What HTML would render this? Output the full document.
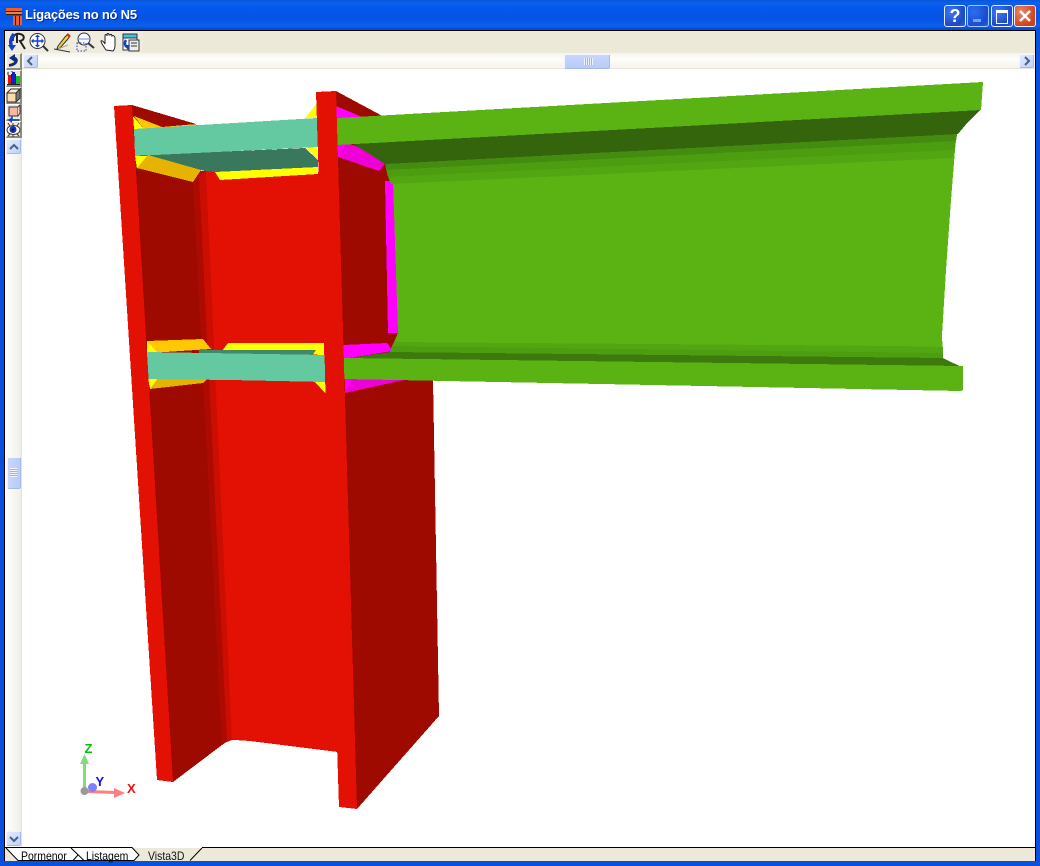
<!DOCTYPE html>
<html><head><meta charset="utf-8">
<style>
html,body{margin:0;padding:0;background:#fff}
#w{position:relative;width:1040px;height:866px;overflow:hidden;font-family:"Liberation Sans",sans-serif;background:#0a50e0}
#w>*{position:absolute}
.tb{left:0;top:0;width:1040px;height:30px;background:linear-gradient(#0a55d8 0,#0a60f0 3px,#0558ee 8px,#0553e3 18px,#0a60ee 26px,#0546c8 30px)}
.title{left:25px;top:7px;color:#fff;font-size:13px;font-weight:bold;letter-spacing:-.22px;text-shadow:1px 1px 0 #0a2a90;white-space:nowrap}
.b{top:5px;width:20px;height:20px;border:1px solid #e8eefc;border-radius:3px;box-sizing:content-box;background:radial-gradient(circle at 30% 30%,#3f78f0,#1a48c8 70%,#2e62dc);color:#fff;text-align:center}
.sb{background:linear-gradient(90deg,#fff,#f5f4ee 70%,#eeede5)}
.btn{background:linear-gradient(135deg,#e2ebfe,#c0d0fa);border:1px solid #f2f5ff;border-right-color:#a6bbe8;border-bottom-color:#a6bbe8;border-radius:2px;box-sizing:border-box}
.tool{background:#ece9d8;border-right:2px solid #8d8b7d;border-bottom:2px solid #8d8b7d;border-top:1px solid #fff;border-left:1px solid #fff;box-sizing:border-box}
.tab{font-size:12px;color:#000;top:849px;white-space:nowrap;transform:scaleX(.87);transform-origin:0 0}
</style></head><body>
<div id="w">
<div class="tb"></div>
<svg style="left:4px;top:6px" width="20" height="20" viewBox="0 0 20 20"><rect x="2" y="2" width="16" height="3" fill="#e8602c"/><rect x="2" y="5" width="16" height="1" fill="#302018"/><rect x="2" y="6" width="16" height="2" fill="#f08040"/><rect x="2" y="8" width="16" height="1" fill="#302018"/><rect x="9" y="10" width="9" height="9" fill="#e8602c"/><rect x="11" y="10" width="1" height="9" fill="#302018"/><rect x="15" y="10" width="1" height="9" fill="#302018"/></svg>
<div class="title">Ligações no nó N5</div>
<div class="b" style="left:944px;font-size:18px;font-weight:bold;line-height:20px">?</div>
<div class="b" style="left:967px;opacity:.72"><div style="position:absolute;left:5px;top:13px;width:8px;height:3px;background:#9db8ef"></div></div>
<div class="b" style="left:991px"><div style="position:absolute;left:4px;top:4px;width:10px;height:10px;border:1px solid #fff;border-top:3px solid #fff"></div></div>
<div class="b" style="left:1014px;background:radial-gradient(circle at 30% 30%,#e8876a,#d2421c 70%,#c8401c)"><svg width="20" height="20" style="position:absolute;left:0;top:0"><path d="M5 5L15 15M15 5L5 15" stroke="#fff" stroke-width="2.6"/></svg></div>

<div style="left:4px;top:30px;width:1032px;height:831px;background:#fff;border:1px solid #000;box-sizing:border-box"></div>
<div style="left:5px;top:31px;width:1030px;height:22px;background:#ece9d8"></div>
<div style="left:5px;top:31px;width:138px;height:22px;background:#efecdf"></div>
<div style="left:22px;top:53px;width:1013px;height:16px;background:linear-gradient(#f4f3ec,#fdfdfb 40%,#f5f4ed);border-bottom:1px solid #e8e6da;box-sizing:border-box"></div>
<div class="sb" style="left:5px;top:53px;width:17px;height:794px;border-right:1px solid #e6e4d8;box-sizing:border-box"></div>

<!-- toolbar icons -->
<svg style="left:0;top:31px" width="145" height="22" viewBox="0 0 145 22">
<g fill="none">
<g transform="translate(6,0)">
<path d="M7 10C6 5 10 2 14 3C19 4 19 9 14 10L19 18M11 4L11 12" stroke="#222" stroke-width="2"/><path d="M8 3C4 8 4 12 6 17" stroke="#1040d0" stroke-width="3.500"/><path d="M2 14L6 20L10 14z" fill="#1040d0"/>
</g>
<circle cx="37.500" cy="10" r="7.500" stroke="#333" fill="#fff"/><path d="M37.500 6V14M33.500 10H41.500" stroke="#1040d0" stroke-width="1.500"/><path d="M35 6L37.500 3.500 40 6zM35 14L37.500 16.500 40 14zM33.500 7.500L31 10 33.500 12.500zM41.500 7.500L44 10 41.500 12.500z" fill="#1040d0"/><path d="M43 15L48 20" stroke="#333" stroke-width="2"/>
<path d="M58 15L65 6L68 3L70 5L68 8L60 17L57 18z" fill="#f0d040" stroke="#333"/><path d="M67 3L70 6" stroke="#d03020" stroke-width="2"/><path d="M54 18L70 21" stroke="#333"/><path d="M58 18L68 14" stroke="#aaa"/>
<circle cx="84" cy="8" r="6" stroke="#333" fill="#f8f8ff"/><path d="M78 8h11" stroke="#7090d0"/><path d="M88 12L94 17" stroke="#333" stroke-width="2"/><rect x="77" y="12" width="9" height="8" stroke="#2040d0" stroke-dasharray="1.500 1.500"/>
<path d="M106 19C104 16 101 12 101 10C102 9 104 11 105 13L105 5C105 3 107 3 107 5L107 4C107 2 109 2 109 4L110 4C110 3 112 3 112 5L112 5C113 4 115 5 115 7L115 14C115 17 114 19 113 20z" fill="#fff" stroke="#222"/>
<rect x="123" y="3" width="14" height="16" fill="#fff" stroke="#333"/><rect x="123" y="3" width="14" height="4" fill="#40c0e8" stroke="#333"/><rect x="129" y="9" width="10" height="11" fill="#eee" stroke="#333"/><path d="M131 12h6M131 15h6" stroke="#333"/><path d="M126 9C124 12 125 15 127 16" stroke="#1040d0" stroke-width="2.500"/><path d="M124 14L128 19L130 14z" fill="#1040d0"/>
</g>
</svg>

<!-- side tools -->
<div class="tool" style="left:6px;top:53px;width:16px;height:17px"></div>
<div class="tool" style="left:6px;top:70px;width:16px;height:17px"></div>
<div class="tool" style="left:6px;top:87px;width:16px;height:17px"></div>
<div class="tool" style="left:6px;top:104px;width:16px;height:17px"></div>
<div class="tool" style="left:6px;top:121px;width:16px;height:17px"></div>
<svg style="left:0;top:50px" width="24" height="90" viewBox="0 0 24 90">
<path d="M13 8C18 8 18 14 9 15.500" fill="none" stroke="#102c80" stroke-width="2.800"/><path d="M9 8L15 4V12z" fill="#102c80"/>
<rect x="8" y="25" width="3" height="9" fill="#e01010"/><rect x="12" y="22" width="3" height="12" fill="#1020d0"/><rect x="16" y="26" width="4" height="8" fill="#10c020"/><path d="M8 25V22M12 22V21M7 34.500H20" stroke="#222"/><path d="M11.500 24V34M15.500 24V34" stroke="#222"/>
<polygon points="7,43 16,43 16,52 7,52" fill="#f8dcae" stroke="#333"/><polygon points="7,43 11,39 20,39 16,43" fill="#fff0d0" stroke="#333"/><polygon points="16,43 20,39 20,48 16,52" fill="#777" stroke="#333"/>
<rect x="9" y="57" width="9" height="9" fill="#f5b8a0" stroke="#333"/><path d="M18 57L20 55V63L18 66" fill="#f5d8c8" stroke="#333"/><path d="M12 66V70H19" stroke="#1040d0" fill="none" stroke-width="1.500"/><path d="M8 70L12 67V73z" fill="#1040d0"/>
<ellipse cx="13.500" cy="80" rx="6.500" ry="4.500" fill="#fff" stroke="#333"/><circle cx="13" cy="79.500" r="3.500" fill="#1030b0"/><circle cx="13" cy="79.500" r="1" fill="#000"/><path d="M8 73L10 76M19 73L17 76M8 86L10 84M19 86L17 84M13 73V75M13 85V87" stroke="#503010"/>
</svg>

<!-- scroll buttons -->
<div class="btn" style="left:23px;top:54px;width:15px;height:14px"></div>
<div class="btn" style="left:1019px;top:54px;width:15px;height:14px"></div>
<div class="btn" style="left:6px;top:139px;width:15px;height:15px"></div>
<div class="btn" style="left:6px;top:831px;width:15px;height:15px"></div>
<svg style="left:0;top:0;width:1040px;height:866px;pointer-events:none" viewBox="0 0 1040 866" fill="none" stroke="#4d6185" stroke-width="2">
<path d="M32 57L28 61L32 65M1025 57L1029 61L1025 65M10 149L14 145L18 149M10 837L14 841L18 837"/>
</svg>
<div class="btn" style="left:564px;top:54px;width:46px;height:15px;background:linear-gradient(#c8d6fc,#b8cbfa)"></div>
<div style="left:584px;top:58px;width:9px;height:7px;background:repeating-linear-gradient(90deg,#eef3ff 0 1px,#9cb3ea 1px 2px)"></div>
<div class="btn" style="left:7px;top:457px;width:14px;height:32px;background:linear-gradient(90deg,#c8d6fc,#b8cbfa)"></div>
<div style="left:10px;top:468px;width:7px;height:9px;background:repeating-linear-gradient(#eef3ff 0 1px,#9cb3ea 1px 2px)"></div>

<!-- 3D model -->
<svg style="left:0;top:0" width="1040" height="866" viewBox="0 0 1040 866" shape-rendering="crispEdges">
<!-- column far parts -->
<polygon fill="#9e0a00" points="132,105 197,125 201,170 222,745 173,782 140,300"/>
<polygon fill="#9e0a00" points="336,91 388,119 390,160 433,380 439,716 357,809 339,400"/>
<!-- web -->
<polygon fill="#ad0b02" points="193,182 199,171 206,171 232,740 228,741 222,745"/>
<polygon fill="#cc0e02" points="199,176 206,171 215,172 232,740 227,742"/>
<polygon fill="#e31004" points="206,171 215,172 220,180 318,172 338,174 338,752 250,741 235,740 232,740"/>
<!-- top stiffener -->
<polygon fill="#ffc800" points="134,116 196,125 197,127 144,129"/>
<polygon fill="#9e0a00" points="132,105 196,124 162,127 134,116"/>
<polygon fill="#ffff00" points="133,116 144,129 134,129"/>
<polygon fill="#ffff00" points="135,156 148,156 137,169"/>
<polygon fill="#e6b400" points="148,155 201,170 193,182 137,168"/>
<polygon fill="#ffff00" points="201,170 318,160 318,174 220,180 215,172"/>
<polygon fill="#3a785e" points="148,155 305,148 318,160 318,167 215,172 205,171 201,170"/>
<polygon fill="#ffff00" points="305,118 317,103 317,118"/>
<polygon fill="#ffff00" points="305,147 317,147 318,160"/>
<polygon fill="#64c8a0" points="134,129 317,118 318,147 135,156"/>
<!-- bottom stiffener -->
<polygon fill="#ffc800" points="147,341 203,339 211,349 165,352 157,352"/>
<polygon fill="#ffff00" points="147,341 157,352 147,353"/>
<polygon fill="#ffff00" points="228,343 324,343 324,355 222,351"/>
<polygon fill="#3f8a6c" points="199,350 230,350 316,350 312,356 199,354"/>
<polygon fill="#ffff00" points="148,378 158,378 150,389"/>
<polygon fill="#e6b400" points="158,378 208,378 203,383 150,389"/>
<polygon fill="#ffff00" points="314,381 325,381 326,394"/>
<polygon fill="#64c8a0" points="147,352 325,355 325,382 230,380 148,379"/>
<!-- magenta plates -->
<polygon fill="#ff00ff" points="336,106 362,117 336,122"/>
<polygon fill="#ff00ff" points="337,143 347,143 338,157"/>
<polygon fill="#ef00d8" points="347,143 390,158 379,171 338,157"/>
<polygon fill="#9e0a00" points="338,157 379,171 387,162 390,340 343,346"/>
<polygon fill="#ff00ff" points="343,345 387,343 393,351 343,359"/>
<polygon fill="#ef00d8" points="345,379 404,380 345,393"/>
<polygon fill="#ff00ff" points="345,379 352,380 346,391"/>
<polygon fill="#ff00ff" points="385,181 394,181 398,333 388,333"/>
<!-- beam web -->
<polygon fill="#5ab312" points="385,160 958,129 956,141 955,150 951,200 946,270 942,335 943,358 388,356 398,333 393,181"/>
<polygon fill="#52a611" points="387,174 955,147 953,158 391,184"/>
<polygon fill="#4d9d10" points="386,168 955,139 955,150 388,177"/>
<polygon fill="#438c0f" points="385,160 958,129 956,141 386,170"/>
<polygon fill="#52a611" points="394,342 900,346 943,347 943,353 392,346"/>
<polygon fill="#4d9d10" points="392,346 943,353 943,358 390,352"/>
<polygon fill="#3d7a0e" points="390,352 943,358 951,362 962,367 344,359"/>
<!-- beam flanges -->
<polygon fill="#34640c" points="352,143 980,110 977,113 968,122 958,134 385,164"/>
<polygon fill="#5ab312" points="337,118 983,82 981,110 337,145"/>
<polygon fill="#5ab312" points="344,358 963,366 963,390 961,391 344,379"/>
<!-- column flanges -->
<polygon fill="#e31004" points="114,106 132,105 173,782 157,780"/>
<polygon fill="#e31004" points="316,92 336,91 357,809 339,807"/>
</svg>

<!-- axes -->
<svg style="left:70px;top:735px" width="80" height="70" viewBox="70 735 80 70">
<path d="M84.500 790V762" stroke="#7fdc7f" stroke-width="3"/><polygon fill="#7fdc7f" points="84.500,754 89,764 80,764"/>
<path d="M88 791.500L116 792.500" stroke="#ff8080" stroke-width="3"/><polygon fill="#ff8080" points="125,793 114,788 114,798"/>
<circle cx="92.500" cy="787.500" r="4.500" fill="#8080ff"/>
<circle cx="84.500" cy="791" r="4" fill="#999"/>
<text x="84.500" y="753" font-family="Liberation Sans" font-weight="bold" font-size="13" fill="#00c000">Z</text>
<text x="95.500" y="786" font-family="Liberation Sans" font-weight="bold" font-size="13" fill="#1010e0">Y</text>
<text x="127" y="793" font-family="Liberation Sans" font-weight="bold" font-size="13" fill="#f01010">X</text>
</svg>

<!-- tabs -->
<div style="left:5px;top:848px;width:1030px;height:13px;background:#ece9d8"></div>
<svg style="left:0;top:845px" width="1040" height="18" viewBox="0 845 1040 18">
<polygon fill="#fff" points="5,848 132,848 139,855 134,861 18,861"/>
<path d="M5 847.500H132L139 855L134 860.500H18L6 848M71 848L84 860.500M73 860.500L78 855M202 847.500H1035M202 848L190 860.500" fill="none" stroke="#000"/>
</svg>
<div class="tab" style="left:21px">Pormenor</div>
<div class="tab" style="left:86px">Listagem</div>
<div class="tab" style="left:148px;color:#111">Vista3D</div>
</div>
</body></html>
